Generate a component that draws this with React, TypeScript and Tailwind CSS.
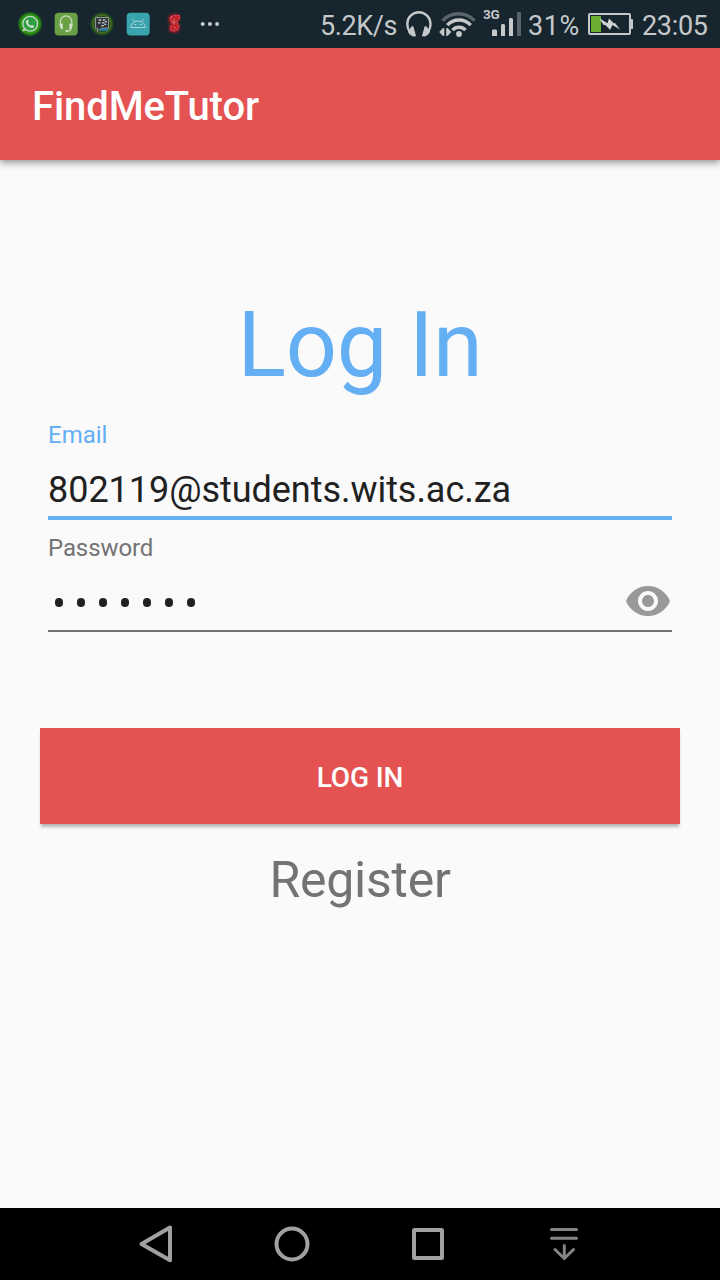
import type { ReactNode } from "react";

function AppIcon({ children }: { children: ReactNode }) {
  return (
    <svg className="h-6 w-6 shrink-0 overflow-visible" viewBox="0 0 24 24" fill="none">
      {children}
    </svg>
  );
}

function NotificationIcons() {
  return (
    <div className="flex w-[302px] shrink-0 items-center gap-3">
      <AppIcon>
        <defs>
          <radialGradient id="glow">
            <stop offset="0.6" stopColor="#2f9a22" />
            <stop offset="0.76" stopColor="#2c8f12" />
            <stop offset="1" stopColor="#1c6b12" stopOpacity="0" />
          </radialGradient>
        </defs>
        <circle cx="12" cy="12" r="13" fill="url(#glow)" />
        <circle cx="12.2" cy="11.8" r="7.4" fill="#2ea043" stroke="#c3d6c3" strokeWidth="1.3" />
        <path d="M5.2 16.4 L4.4 19.6 L8 18.6" fill="#c3d6c3" />
        <path
          d="M9 8.1c.5-.5 1-.4 1.200.2l.5 1.300c.1.5-.7 1-.6 1.300.6 1.300 1.500 2.200 2.900 2.900.4.1.8-.9 1.300-.7l1.500.8c.4.3.2 1-.3 1.400-1.300 1-3 .6-5-.9-2.300-1.800-3.500-4.500-1.500-6.300z"
          fill="#d4dfd4"
        />
      </AppIcon>
      <AppIcon>
        <rect x="0.7" y="0.7" width="23" height="22.800" rx="4" fill="#69a044" />
        <path d="M6.400 14V10.200a5.700 6.400 0 0 1 11.400 0V14" stroke="#c9d8bd" strokeWidth="1.300" />
        <path d="M5.500 12l3.300-.5v6L6.500 16.500zM18.700 12l-3.300-.5v6l2.300-1z" fill="#d5dfcd" />
        <path d="M17 16.500c0 1.800-1.300 2.700-4 2.700" stroke="#c9d8bd" strokeWidth="1.200" />
        <circle cx="12.700" cy="19" r="1.200" fill="#d5dfcd" />
      </AppIcon>
      <AppIcon>
        <defs>
          <radialGradient id="darkGlow">
            <stop offset="0.6" stopColor="#244f24" />
            <stop offset="0.800" stopColor="#25601a" />
            <stop offset="1" stopColor="#1b451d" stopOpacity="0" />
          </radialGradient>
        </defs>
        <circle cx="12" cy="12" r="12.500" fill="url(#darkGlow)" />
        <circle cx="12" cy="12" r="9" stroke="#5e6a26" strokeWidth="1" />
        <path d="M10 16h8v2.800h-8z" fill="#177cae" />
        <path
          d="M5.500 5.500h13v10.700h-7l-4 3v-3H5.500z"
          fill="#30353b"
          stroke="#8d9796"
          strokeWidth="1"
        />
        <path
          d="M8.600 8h2.600M12.700 8h2.600M7.900 10.900h2.600M12 10.900h2.600M15 9.700h2M11.300 13.700h2.600M14.300 12.400h2"
          stroke="#c2c8c7"
          strokeWidth="1.300"
        />
      </AppIcon>
      <AppIcon>
        <rect x="0.700" y="0.700" width="23" height="22.800" rx="4" fill="#38a4ad" />
        <path
          d="M4.700 15.500h14.800c-.3-2.500-1.900-4.800-4-5.700-2.200-.9-4.700-.9-6.900 0-2.100.9-3.600 3.200-3.900 5.700zM8.600 9.800 7 7.200M15.600 9.800l1.700-2.600"
          stroke="#a9d4d5"
          strokeWidth="1"
        />
        <path d="M8.600 12.500h1.600M14 12.500h1.600" stroke="#c1dede" strokeWidth="1.200" />
      </AppIcon>
      <AppIcon>
        <defs>
          <filter id="redGlow" x="-60%" y="-40%" width="220%" height="180%">
            <feGaussianBlur stdDeviation="1.100" />
          </filter>
        </defs>
        <path
          d="M8 4c2-1.500 8-2 9 0 1 2.500-1 5-2.500 6 3 2 3.500 6 1.500 8.500-1.600 2-6 2-7.500.5-1.400-2-1-5 1-7-2-2-3-5-1.500-8z"
          fill="#b01d22"
          stroke="#8d2022"
          strokeWidth="2"
          filter="url(#redGlow)"
        />
        <path
          d="M8.500 4.500c2-1.500 8-2.500 9.500-1 .9 2.500-1 5-3.500 6.500 3 2 3.200 6 1.500 8.300-1.500 1.500-6 1.500-7.500.2-1.200-2-.5-4.500 1.500-6.500C7.500 9.500 6.700 7 8.500 4.500z"
          fill="#c32328"
        />
        <path
          d="M9 5c2-2 6-1 8.500-1.600.5 3-1.500 5.300-3.500 6.600 3.500 2 3 6 1 8-2 1-4.500 1-6.300-.5-1-2 .8-4 2.800-5.500-2-2-3.500-4-2.500-7z"
          stroke="#c974a8"
          strokeWidth="1"
          strokeDasharray="1.500 2"
        />
        <path d="M12 7v6M10.500 10h3M12 15l2 1.500" stroke="#d9a09a" strokeWidth="1" strokeDasharray="1 1" />
      </AppIcon>
      <AppIcon>
        <circle cx="4.700" cy="12" r="2" fill="#c8cbcd" />
        <circle cx="11.900" cy="12" r="2" fill="#c8cbcd" />
        <circle cx="19.100" cy="12" r="2" fill="#c8cbcd" />
      </AppIcon>
    </div>
  );
}

function StatusBar() {
  return (
    <div className="flex h-12 items-center bg-[#17262e] pl-[18px] text-[27px] leading-8 whitespace-nowrap text-[#c5c8ca]">
      <NotificationIcons />
      <span className="w-[86px] shrink-0 pt-[3px] tracking-[-0.4px]">5.2K/s</span>
      <svg className="h-12 w-[33px] shrink-0" viewBox="406 0 33 48" fill="none">
        <path
          d="M409.500 31.500C407.800 29 407.300 26.500 407.300 24a11.600 11.800 0 0 1 23.200 0c0 2.500-.5 5-2.200 7.500"
          stroke="#c5c8ca"
          strokeWidth="2.400"
        />
        <path
          d="M412 26l1.400.4 2.700 9.800-3 .2c-2.500-.9-5-2.800-5.200-5.300zM426 26l-1.400.4-2.700 9.800 3 .2c2.500-.9 5-2.800 5.200-5.300z"
          fill="#c5c8ca"
        />
      </svg>
      <svg className="h-12 w-[43px] shrink-0" viewBox="439 0 43 48" fill="none">
        <path d="M442.500 20.700c8.500-9.300 23.500-9.300 32 0" stroke="#59656b" strokeWidth="3.300" />
        <path d="M447.300 25.200c6.200-7 17.200-7 23.400 0M452.500 30.100c3.700-3.900 9.300-3.900 13 0" stroke="#c5c8ca" strokeWidth="3.500" />
        <circle cx="459" cy="34" r="2.900" fill="#c5c8ca" />
        <path d="M444.300 28v8l-1.600-.3-3.500-3.700 3.500-3.700zM446.200 28v8l1.600-.3 3.500-3.700-3.500-3.700z" fill="#c5c8ca" />
      </svg>
      <div className="flex h-12 w-[46px] shrink-0 items-start">
        <span className="w-[9px] pt-[6px] pl-px text-[13.500px] leading-4 font-bold tracking-[-0.3px]">3G</span>
        <svg className="h-12 w-[31px] shrink-0" viewBox="491 0 31 48">
          <path d="M492 36v-5.500l1-1h3l1 1V36zM501 36V25l1-1h2l1 1v11zM509 36V19l1-1h2l1 1v17z" fill="#c5c8ca" />
          <path d="M517 36V13l1-1h2l1 1v23z" fill="#59656b" />
        </svg>
      </div>
      <span className="w-[60px] shrink-0 pt-[3px] tracking-[0.600px]">31%</span>
      <svg className="h-12 w-[54px] shrink-0" viewBox="588 0 54 48" fill="none">
        <rect x="589" y="14" width="41" height="20" rx="1" stroke="#c5c8ca" strokeWidth="2" />
        <path d="M630 19h2.500l.5.500v9l-.5.500H630z" fill="#c5c8ca" />
        <path d="M591 16h10v16h-10z" fill="#6cae2f" />
        <path d="M599 18l8.500 5.200 1.500-4.700 4.800 4.800 1.200-.4 5 6.600-7.600-4.500-2.300 5-5-5.300-1.300.6z" fill="#d1d4d5" />
      </svg>
      <span className="shrink-0 pt-[3px] tracking-[-0.300px]">23:05</span>
    </div>
  );
}

function NavigationBar() {
  return (
    <nav className="flex h-[72px] items-center gap-[88px] bg-black pl-[132px]">
      <svg className="h-12 w-12" viewBox="132 1220 48 48" fill="none" stroke="#a1a1a1" strokeWidth="4" strokeLinejoin="round">
        <path d="M170 1227.500v32.700L141.500 1244z" />
      </svg>
      <svg className="h-12 w-12" viewBox="268 1220 48 48" fill="none" stroke="#a1a1a1" strokeWidth="4">
        <circle cx="292" cy="1244" r="15.500" />
      </svg>
      <svg className="h-12 w-12" viewBox="404 1220 48 48" fill="none" stroke="#a1a1a1" strokeWidth="4">
        <rect x="414" y="1230" width="28" height="28" rx="0.500" />
      </svg>
      <svg className="h-12 w-12" viewBox="540 1220 48 48" fill="none" stroke="#858585" strokeWidth="3" strokeLinecap="round" strokeLinejoin="round">
        <path d="M551.500 1229.500h25M551.500 1238.300h25M564.300 1245.500v12.500M555 1249.500l9.300 9 9.300-9" />
      </svg>
    </nav>
  );
}

export default function App() {
  return (
    <div className="flex h-[1280px] w-[720px] flex-col overflow-hidden bg-[#fafafa] font-['Roboto',sans-serif]">
      <StatusBar />
      <header className="flex h-28 shrink-0 items-center bg-[#e45251] pt-1.5 pl-8 shadow-[0_3px_7px_rgba(0,0,0,0.4)]">
        <h1 className="text-[40px] leading-[48px] font-medium tracking-[-0.1px] text-white">FindMeTutor</h1>
      </header>
      <main className="flex flex-1 flex-col px-10 pt-[134px]">
        <h2 className="text-center text-[90px] leading-[104px] tracking-[-0.3px] text-[#64aef4]">Log In</h2>
        <div className="mt-[23px] flex flex-col px-2">
          <label className="text-[24px] leading-7 text-[#64aef4]">Email</label>
          <div className="mt-5 h-[51px] border-b-4 border-[#64aef4] text-[36px] leading-[42px] tracking-[-0.04px] text-[#212121]">
            802119@students.wits.ac.za
          </div>
          <label className="mt-3.5 text-[24px] leading-7 tracking-[-0.1px] text-[#737373]">Password</label>
          <div className="flex h-[70px] items-center justify-between border-b-2 border-[#737373] pt-2.5 pl-[7px]">
            <div className="flex gap-3.5 pt-0.5">
              {Array.from({ length: 7 }, (_, i) => (
                <span key={i} className="h-[9px] w-2 rounded-full bg-[#212121]" />
              ))}
            </div>
            <svg className="h-12 w-12" viewBox="0 0 24 24" fill="#999999">
              <path d="M12 4.500C7 4.500 2.730 7.610 1 12c1.730 4.390 6 7.500 11 7.500s9.270-3.110 11-7.500c-1.730-4.390-6-7.500-11-7.500zM12 17c-2.760 0-5-2.240-5-5s2.240-5 5-5 5 2.240 5 5-2.240 5-5 5zm0-8c-1.660 0-3 1.340-3 3s1.340 3 3 3 3-1.340 3-3-1.340-3-3-3z" />
            </svg>
          </div>
        </div>
        <button className="mt-24 h-24 shrink-0 bg-[#e45251] pt-1 text-[28px] leading-8 font-medium tracking-[-0.15px] text-white shadow-[0_4px_3px_-1px_rgba(0,0,0,0.28)]">
          LOG IN
        </button>
        <a className="mt-[26px] text-center text-[50px] leading-[60px] tracking-[-0.25px] text-[#737373]">Register</a>
      </main>
      <NavigationBar />
    </div>
  );
}
